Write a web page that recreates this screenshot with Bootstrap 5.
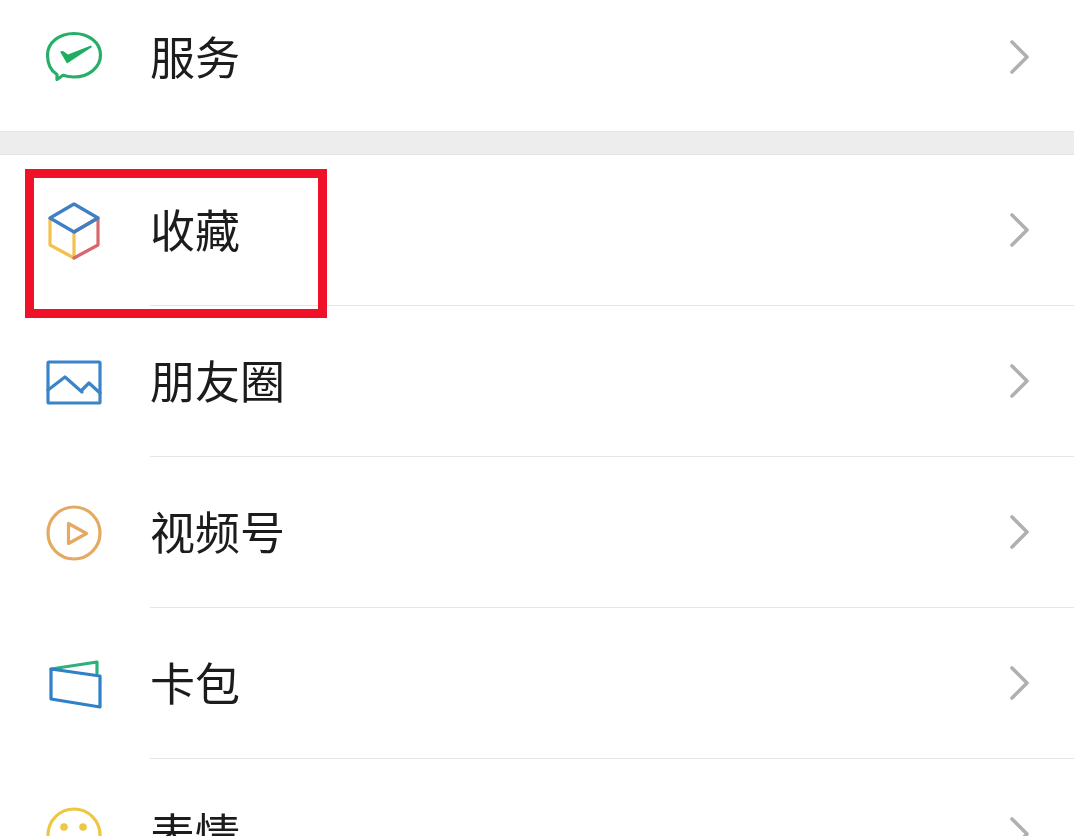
<!DOCTYPE html>
<html lang="zh-CN">
<head>
<meta charset="utf-8">
<title>发现</title>
<link href="https://cdn.jsdelivr.net/npm/bootstrap@5.3.0/dist/css/bootstrap.min.css" rel="stylesheet">
<style>
  html, body { background: #fff; }
  .screen { width: 1074px; height: 836px; font-family: "Noto Sans CJK SC", "Noto Sans", sans-serif; color: #1c1c1c; }
  .menu-row { height: 151px; }
  .menu-row.first-row { height: 131px; padding-bottom: 17px; }
  .icon-cell { width: 150px; padding-left: 44px; }
  .icon-cell svg { width: 60px; height: 60px; display: block; filter: blur(.4px); }
  .row-body { border-bottom: 1px solid #e6e6e6; }
  .first-row .row-body { border-bottom: 0; }
  .label-text { font-size: 45px; line-height: 60px; padding-bottom: 2px; filter: blur(.35px); }
  .chev { width: 20px; height: 36px; margin-right: 45px; filter: blur(.5px); }
  .gap-band { height: 24px; background: #ededed; border-top: 1px solid #e4e4e4; border-bottom: 1px solid #e6e6e6; }
  .highlight-box { left: 25px; top: 14px; width: 302px; height: 149px; border: 9px solid #ee1128; pointer-events: none; }
</style>
</head>
<body class="m-0">
<div class="screen overflow-hidden">
  <ul class="list-unstyled m-0">
    <li class="menu-row first-row d-flex">
      <div class="icon-cell d-flex align-items-center flex-shrink-0">
        <svg viewBox="0 0 60 60" fill="none"><path d="M13 47.5C6.5 43.5 3.5 37.5 3.5 28 3.5 15.5 15.5 6.5 30 6.5S56.5 15.5 56.5 28 44.5 50 30 50c-4 0-7.5-.5-11-1.7L13 52.5Z" stroke="#27ae68" stroke-width="3.2" stroke-linejoin="round"/><path d="M16 24.5L19 24 24 27.5 47 18.5 48 20 23 36.5Z" fill="#1fae60"/></svg>
      </div>
      <div class="row-body flex-grow-1 d-flex align-items-center justify-content-between">
        <span class="label-text">服务</span>
        <svg class="chev" viewBox="0 0 20 36" fill="none"><path d="M3 3l15 15L3 33" stroke="#b0b0b0" stroke-width="3.6" stroke-linecap="round" stroke-linejoin="round"/></svg>
      </div>
    </li>
  </ul>
  <div class="gap-band"></div>
  <ul class="list-unstyled m-0">
    <li class="menu-row d-flex position-relative">
      <div class="icon-cell d-flex align-items-center flex-shrink-0">
        <svg viewBox="0 0 60 60" fill="none" stroke-width="3.2" stroke-linecap="round" stroke-linejoin="round"><path d="M30 31V57L6 44V17" stroke="#f2c14e"/><path d="M30 57L54 44V17L30 31" stroke="#d9676b"/><path d="M30 3L54 17 30 31 6 17Z" stroke="#3f7fc4"/></svg>
      </div>
      <div class="row-body flex-grow-1 d-flex align-items-center justify-content-between">
        <span class="label-text">收藏</span>
        <svg class="chev" viewBox="0 0 20 36" fill="none"><path d="M3 3l15 15L3 33" stroke="#b0b0b0" stroke-width="3.6" stroke-linecap="round" stroke-linejoin="round"/></svg>
      </div>
      <div class="highlight-box position-absolute"></div>
    </li>
    <li class="menu-row d-flex">
      <div class="icon-cell d-flex align-items-center flex-shrink-0">
        <svg viewBox="0 0 60 60" fill="none" stroke="#3a85c8" stroke-width="3.2" stroke-linejoin="round" stroke-linecap="round"><rect x="4" y="10" width="52" height="41" rx="1"/><path d="M4 38L21 25 38 40M38 38L45 31 56 41"/></svg>
      </div>
      <div class="row-body flex-grow-1 d-flex align-items-center justify-content-between">
        <span class="label-text">朋友圈</span>
        <svg class="chev" viewBox="0 0 20 36" fill="none"><path d="M3 3l15 15L3 33" stroke="#b0b0b0" stroke-width="3.6" stroke-linecap="round" stroke-linejoin="round"/></svg>
      </div>
    </li>
    <li class="menu-row d-flex">
      <div class="icon-cell d-flex align-items-center flex-shrink-0">
        <svg viewBox="0 0 60 60" fill="none" stroke="#e5aa62" stroke-width="3.2" stroke-linejoin="round"><circle cx="30" cy="30" r="26"/><path d="M24.5 20.5V40.5L42.5 30.5Z"/></svg>
      </div>
      <div class="row-body flex-grow-1 d-flex align-items-center justify-content-between">
        <span class="label-text">视频号</span>
        <svg class="chev" viewBox="0 0 20 36" fill="none"><path d="M3 3l15 15L3 33" stroke="#b0b0b0" stroke-width="3.6" stroke-linecap="round" stroke-linejoin="round"/></svg>
      </div>
    </li>
    <li class="menu-row d-flex">
      <div class="icon-cell d-flex align-items-center flex-shrink-0">
        <svg viewBox="0 0 60 60" fill="none" stroke-width="3.2" stroke-linejoin="round" stroke-linecap="round"><path d="M7 15L53 8V19" stroke="#2bb179"/><path d="M7 15L56 22V53L7 45Z" stroke="#2f80c6"/></svg>
      </div>
      <div class="row-body flex-grow-1 d-flex align-items-center justify-content-between">
        <span class="label-text">卡包</span>
        <svg class="chev" viewBox="0 0 20 36" fill="none"><path d="M3 3l15 15L3 33" stroke="#b0b0b0" stroke-width="3.6" stroke-linecap="round" stroke-linejoin="round"/></svg>
      </div>
    </li>
    <li class="menu-row d-flex">
      <div class="icon-cell d-flex align-items-center flex-shrink-0">
        <svg viewBox="0 0 60 60" fill="none"><circle cx="30" cy="30" r="26" stroke="#ecc742" stroke-width="3.2"/><circle cx="20" cy="22" r="3.8" fill="#ecc742"/><circle cx="39" cy="22" r="3.8" fill="#ecc742"/></svg>
      </div>
      <div class="row-body flex-grow-1 d-flex align-items-center justify-content-between">
        <span class="label-text">表情</span>
        <svg class="chev" viewBox="0 0 20 36" fill="none"><path d="M3 3l15 15L3 33" stroke="#b0b0b0" stroke-width="3.6" stroke-linecap="round" stroke-linejoin="round"/></svg>
      </div>
    </li>
  </ul>
</div>
<script src="https://cdn.jsdelivr.net/npm/bootstrap@5.3.0/dist/js/bootstrap.bundle.min.js"></script>
</body>
</html>
